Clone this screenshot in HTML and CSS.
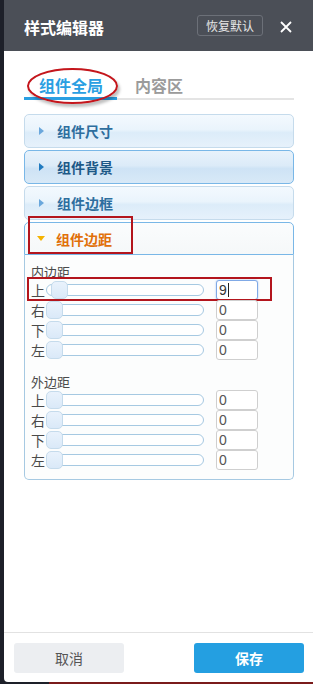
FILE: index.html
```html
<!DOCTYPE html>
<html lang="zh-CN">
<head>
    <meta charset="UTF-8">
    <meta name="viewport" content="width=device-width, initial-scale=1.0">
    <title>样式编辑器</title>
    <link rel="stylesheet" href="styles.css">
</head>
<body>

    <div class="dialog">
        <div class="dlg-head">
            <span class="dlg-title">样式编辑器</span>
            <button class="btn-reset">恢复默认</button>
            <span class="dlg-close">
                <svg width="12" height="12" viewBox="0 0 12 12"><path d="M1 1L11 11M11 1L1 11" stroke="#fff" stroke-width="1.8" fill="none"/></svg>
            </span>
        </div>

        <div class="dlg-body">
            <div class="tabs">
                <span class="tab active">组件全局<span class="mark-ellipse"></span></span>
                <span class="tab">内容区</span>
            </div>

            <div class="accordion">
                <div class="acc-head">
                    <svg class="tri" width="5" height="8" viewBox="0 0 5 8"><path d="M0 0L5 4L0 8Z"/></svg>组件尺寸
                </div>
                <div class="acc-head hover">
                    <svg class="tri" width="5" height="8" viewBox="0 0 5 8"><path d="M0 0L5 4L0 8Z"/></svg>组件背景
                </div>
                <div class="acc-head">
                    <svg class="tri" width="5" height="8" viewBox="0 0 5 8"><path d="M0 0L5 4L0 8Z"/></svg>组件边框
                </div>
                <div class="acc-head active">
                    <svg class="tri-down" width="8" height="5" viewBox="0 0 8 5"><path d="M0 0L8 0L4 5Z"/></svg>组件边距
                    <span class="mark-rect"></span>
                </div>
                <div class="acc-panel">
                    <div class="group-label">内边距</div>
                    <div class="row">
                        <span class="side">上</span>
                        <div class="slider"><span class="handle" style="left: 4px"></span></div>
                        <span class="num focus">9<i class="caret"></i></span>
                        <span class="mark-row"></span>
                    </div>
                    <div class="row">
                        <span class="side">右</span>
                        <div class="slider"><span class="handle"></span></div>
                        <span class="num">0</span>
                    </div>
                    <div class="row">
                        <span class="side">下</span>
                        <div class="slider"><span class="handle"></span></div>
                        <span class="num">0</span>
                    </div>
                    <div class="row">
                        <span class="side">左</span>
                        <div class="slider"><span class="handle"></span></div>
                        <span class="num">0</span>
                    </div>

                    <div class="group-label second">外边距</div>
                    <div class="row">
                        <span class="side">上</span>
                        <div class="slider"><span class="handle"></span></div>
                        <span class="num">0</span>
                    </div>
                    <div class="row">
                        <span class="side">右</span>
                        <div class="slider"><span class="handle"></span></div>
                        <span class="num">0</span>
                    </div>
                    <div class="row">
                        <span class="side">下</span>
                        <div class="slider"><span class="handle"></span></div>
                        <span class="num">0</span>
                    </div>
                    <div class="row">
                        <span class="side">左</span>
                        <div class="slider"><span class="handle"></span></div>
                        <span class="num">0</span>
                    </div>
                </div>
            </div>
        </div>

        <div class="dlg-foot">
            <button class="btn btn-cancel">取消</button>
            <button class="btn btn-save">保存</button>
        </div>
    </div>

    <div class="page-strip"></div>

</body>
</html>
```

FILE: styles.css
```css
html, body {
    overflow: hidden;
}

body {
    font-family: "Noto Sans CJK SC", "Liberation Sans", sans-serif;
    margin: 0;
    padding: 0;
    background-color: #1d2029;
}

.dialog {
    margin-left: 4px;
    width: 314px;
    height: 682px;
    background-color: #fff;
    border-radius: 0 0 4px 4px;
    display: flex;
    flex-direction: column;
}

/* header */
.dlg-head {
    height: 51px;
    flex-shrink: 0;
    background-color: #4b4f57;
    display: flex;
    align-items: center;
    padding: 2px 26px 0 20px;
    box-sizing: border-box;
}

.dlg-title {
    color: #fff;
    font-size: 16px;
    font-weight: bold;
}

.btn-reset {
    margin-left: auto;
    width: 66px;
    height: 21px;
    padding: 0;
    margin-top: -3px;
    background: transparent;
    border: 1px solid #6c7078;
    border-radius: 3px;
    color: #e6e6e6;
    font-family: inherit;
    font-size: 12px;
    line-height: 19px;
}

.dlg-close {
    margin-left: 17px;
    width: 12px;
    height: 12px;
    display: flex;
}

/* body */
.dlg-body {
    flex: 1;
    padding: 22px 24px 0 20px;
}

.tabs {
    display: flex;
    border-bottom: 2px solid #e4e4e4;
}

.tab {
    position: relative;
    padding: 0 17px 0 18px;
    line-height: 24px;
    font-size: 16px;
    font-weight: bold;
    color: #9b9b9b;
    margin-bottom: -2px;
    border-bottom: 3px solid transparent;
}

.tab.active {
    color: #2a9fe2;
    border-bottom-color: #2a9fe2;
    padding: 0 14px 0 15px;
}

.mark-ellipse {
    position: absolute;
    left: 3px;
    top: -5px;
    width: 91px;
    height: 36px;
    box-sizing: border-box;
    border: 2px solid #c4161c;
    border-radius: 50%;
    box-shadow: 2px 3px 3px rgba(0, 0, 0, 0.25);
}

/* accordion */
.accordion {
    margin-top: 14px;
}

.acc-head {
    position: relative;
    height: 34px;
    box-sizing: border-box;
    margin-top: 2px;
    border: 1px solid #c5dbec;
    border-radius: 5px;
    background: linear-gradient(to bottom, #f3f9fe 0%, #eaf4fc 45%, #dcecf9 55%, #e6f1fb 100%);
    display: flex;
    align-items: center;
    padding-left: 14px;
    font-size: 14px;
    font-weight: bold;
    color: #2e6e9e;
}

.acc-head:first-child {
    margin-top: 0;
}

.acc-head .tri {
    fill: #6aa7dc;
    margin-right: 13px;
}

.acc-head.hover {
    border-color: #79b7e7;
    background: linear-gradient(to bottom, #e8f2fb 0%, #dcebf8 45%, #cee3f5 55%, #d8e9f7 100%);
    color: #1d5987;
}

.acc-head.hover .tri {
    fill: #217bc0;
}

.acc-head.active {
    height: 33px;
    border-color: #79b7e7;
    border-radius: 5px 5px 0 0;
    background: linear-gradient(to bottom, #fbfcfd 0%, #f5f8f9 100%);
    color: #e17009;
    padding-left: 12px;
}

.acc-head .tri-down {
    fill: #f5b301;
    margin-right: 11px;
}

.mark-rect {
    position: absolute;
    left: 3px;
    top: -7px;
    width: 105px;
    height: 38px;
    box-sizing: border-box;
    border: 2px solid #b3151d;
}

.acc-panel {
    border: 1px solid #a6c9e2;
    border-top: none;
    border-radius: 0 0 5px 5px;
    background-color: #fcfdfd;
    padding: 9px 0 9px 6px;
}

.group-label {
    font-size: 13px;
    line-height: 16px;
    color: #4a4a4a;
}

.group-label.second {
    margin-top: 14px;
}

.row {
    position: relative;
    height: 20px;
    display: flex;
    align-items: center;
}

.side {
    width: 15px;
    font-size: 14px;
    color: #4a4a4a;
}

.slider {
    position: relative;
    width: 158px;
    height: 12px;
    box-sizing: border-box;
    border: 1px solid #a6c9e2;
    border-radius: 6px;
    background-color: #fff;
}

.handle {
    position: absolute;
    left: -1px;
    top: -4px;
    width: 17px;
    height: 18px;
    box-sizing: border-box;
    border: 1px solid #c5dbec;
    border-radius: 5px;
    background: linear-gradient(to bottom, #e9f2fc, #dae9f8);
}

.num {
    margin-left: 12px;
    width: 42px;
    height: 20px;
    box-sizing: border-box;
    border: 1px solid #cfcfcf;
    border-radius: 3px;
    background-color: #fff;
    font-family: "Liberation Sans", sans-serif;
    font-size: 14px;
    line-height: 18px;
    padding-left: 2px;
    color: #555;
    display: flex;
    align-items: center;
}

.num.focus {
    border-color: #80a9e6;
    box-shadow: 0 0 2px rgba(80, 140, 230, 0.5);
    color: #333;
}

.caret {
    display: inline-block;
    width: 1px;
    height: 14px;
    background-color: #222;
    margin-left: 1px;
}

.mark-row {
    position: absolute;
    left: -4px;
    top: -3px;
    width: 245px;
    height: 24px;
    box-sizing: border-box;
    border: 2px solid #b3151d;
}

/* footer */
.dlg-foot {
    flex-shrink: 0;
    border-top: 1px solid #e2e2e2;
    padding: 10px 14px 9px 10px;
    display: flex;
    justify-content: space-between;
}

.btn {
    width: 110px;
    height: 30px;
    border: none;
    border-radius: 3px;
    font-family: inherit;
    font-size: 14px;
    padding: 0;
}

.btn-cancel {
    background-color: #eceef1;
    color: #555;
}

.btn-save {
    background-color: #249fe1;
    color: #fff;
    font-weight: bold;
}

.page-strip {
    margin-left: 49px;
    height: 3px;
    background-color: #7a1b1b;
}
```
